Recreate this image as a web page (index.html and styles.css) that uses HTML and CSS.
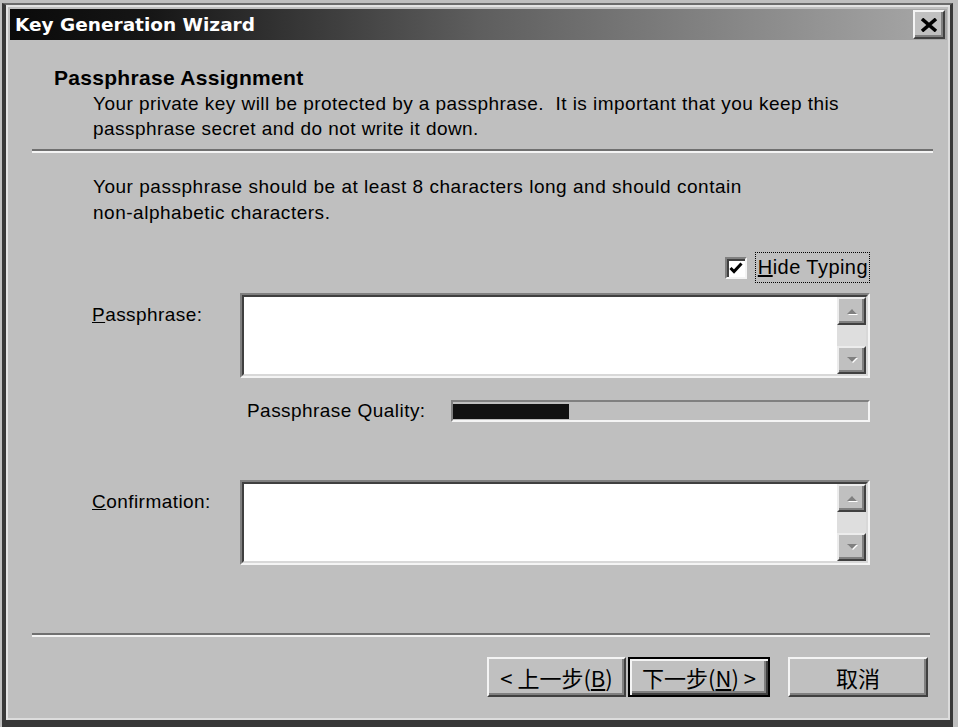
FILE: index.html
```html
<!DOCTYPE html>
<html lang="en">
<head>
    <meta charset="UTF-8">
    <title>Key Generation Wizard</title>
    <link rel="stylesheet" href="styles.css">
</head>
<body>
    <div class="window">
        <div class="titlebar">
            <span class="title">Key Generation Wizard</span>
            <button class="close-btn">
                <svg width="18" height="14" viewBox="0 0 18 14"><path d="M2 1 L16 13 M16 1 L2 13" stroke="#000" stroke-width="3.6" fill="none"/></svg>
            </button>
        </div>

        <!-- Wizard page header -->
        <div class="header">
            <div class="heading">Passphrase Assignment</div>
            <p class="subtitle">Your private key will be protected by a passphrase.&nbsp; It is important that you keep this<br>passphrase secret and do not write it down.</p>
        </div>
        <div class="separator"></div>

        <!-- Page body -->
        <p class="intro">Your passphrase should be at least 8 characters long and should contain<br>non-alphabetic characters.</p>

        <div class="form">
            <div class="hide-row">
                <span class="check-box">
                    <svg width="14" height="12" viewBox="0 0 14 12"><path d="M1.5 6 L5 9.5 L12.5 1.5" stroke="#000" stroke-width="3" fill="none"/></svg>
                </span>
                <span class="focus-text"><u>H</u>ide Typing</span>
            </div>

            <div class="field-row">
                <span class="field-label"><u>P</u>assphrase:</span>
                <div class="textbox">
                    <div class="textbox-inner">
                        <div class="text-area"></div>
                        <div class="scrollbar">
                            <div class="scroll-btn">
                                <svg width="12" height="8" viewBox="0 0 12 8"><path d="M1 7 L6 2 L11 7 Z" fill="#fff" transform="translate(1 1)"/><path d="M1 7 L6 2 L11 7 Z" fill="#808080"/></svg>
                            </div>
                            <div class="scroll-track"></div>
                            <div class="scroll-btn">
                                <svg width="12" height="8" viewBox="0 0 12 8"><path d="M1 1 L6 6 L11 1 Z" fill="#fff" transform="translate(1 1)"/><path d="M1 1 L6 6 L11 1 Z" fill="#808080"/></svg>
                            </div>
                        </div>
                    </div>
                </div>
            </div>

            <div class="quality-row">
                <span class="quality-label">Passphrase Quality:</span>
                <div class="progress">
                    <div class="progress-fill" style="width: 28%"></div>
                </div>
            </div>

            <div class="field-row confirm">
                <span class="field-label"><u>C</u>onfirmation:</span>
                <div class="textbox">
                    <div class="textbox-inner">
                        <div class="text-area"></div>
                        <div class="scrollbar">
                            <div class="scroll-btn">
                                <svg width="12" height="8" viewBox="0 0 12 8"><path d="M1 7 L6 2 L11 7 Z" fill="#fff" transform="translate(1 1)"/><path d="M1 7 L6 2 L11 7 Z" fill="#808080"/></svg>
                            </div>
                            <div class="scroll-track"></div>
                            <div class="scroll-btn">
                                <svg width="12" height="8" viewBox="0 0 12 8"><path d="M1 1 L6 6 L11 1 Z" fill="#fff" transform="translate(1 1)"/><path d="M1 1 L6 6 L11 1 Z" fill="#808080"/></svg>
                            </div>
                        </div>
                    </div>
                </div>
            </div>
        </div>

        <div class="separator bottom"></div>

        <!-- Wizard buttons -->
        <div class="buttons">
            <button class="btn">&lt; 上一步(<u>B</u>)</button>
            <button class="btn default">下一步(<u>N</u>) &gt;</button>
            <button class="btn cancel">取消</button>
        </div>
    </div>
</body>
</html>
```

FILE: styles.css
```css
body {
    margin: 0;
    background-color: #bfbfbf;
    font-family: "Liberation Sans", Arial, sans-serif;
    color: #000;
    width: 958px;
    height: 727px;
    overflow: hidden;
}

.window {
    box-sizing: border-box;
    width: 951px;
    height: 724px;
    margin: 3px 0 0 2px;
    border-left: 4px solid #383838;
    border-top: 2px solid #6a6a6a;
    border-right: 3px solid #383838;
    border-bottom: 7px solid #383838;
    padding: 4px 3px 0 4px;
    background-color: #bfbfbf;
    box-shadow: inset 2px 2px 0 #e4e4e4, inset -2px -2px 0 #dcdcdc;
}

.titlebar {
    display: flex;
    align-items: center;
    height: 31px;
    background: linear-gradient(to right, #0a0a0a 0%, #161616 15%, #5e5e5e 50%, #a8a8a8 100%);
}

.title {
    flex: 1;
    padding-left: 5px;
    font-family: "DejaVu Sans", sans-serif;
    font-weight: bold;
    font-size: 18.5px;
    color: #fff;
}

.close-btn {
    box-sizing: border-box;
    width: 32px;
    height: 29px;
    margin-right: 2px;
    padding: 0;
    display: flex;
    align-items: center;
    justify-content: center;
    background-color: #c0c0c0;
    border: 2px solid;
    border-color: #f4f4f4 #404040 #404040 #f4f4f4;
    box-shadow: inset -2px -2px 0 #808080;
}

.header {
    padding: 25px 0 0 44px;
}

.heading {
    font-weight: bold;
    font-size: 21px;
    letter-spacing: 0.3px;
    line-height: 26px;
}

.subtitle {
    margin: 0;
    padding-left: 39px;
    font-size: 19px;
    letter-spacing: 0.45px;
    line-height: 25px;
}

.separator {
    margin: 8px 14px 0 22px;
    border-top: 2px solid #707070;
    border-bottom: 2px solid #f4f4f4;
}

.separator.bottom {
    margin: 68px 17px 0 22px;
}

.intro {
    margin: 21px 0 0 83px;
    font-size: 19px;
    letter-spacing: 0.52px;
    line-height: 26px;
}

.form {
    padding: 0 77px 0 82px;
    font-size: 19px;
    letter-spacing: 0.45px;
}

.hide-row {
    display: flex;
    justify-content: flex-end;
    align-items: center;
    margin-top: 26px;
}

.check-box {
    box-sizing: border-box;
    width: 22px;
    height: 22px;
    margin-right: 8px;
    display: flex;
    align-items: center;
    justify-content: center;
    background-color: #fff;
    border: 2px solid;
    border-color: #808080 #f4f4f4 #f4f4f4 #808080;
    box-shadow: inset 2px 2px 0 #404040;
}

.focus-text {
    font-size: 20px;
    line-height: 25px;
    padding: 2px 1px 2px 2px;
    border: 1px dotted #000;
}

.field-row {
    display: flex;
    margin-top: 10px;
}

.field-row.confirm {
    margin-top: 58px;
}

.field-label {
    width: 148px;
    padding-top: 9px;
    line-height: 26px;
}

.textbox {
    flex: 1;
    box-sizing: border-box;
    height: 85px;
    border: 2px solid;
    border-color: #808080 #f4f4f4 #f4f4f4 #808080;
}

.textbox-inner {
    display: flex;
    height: 100%;
    box-sizing: border-box;
    border: 2px solid;
    border-color: #404040 #d8d8d8 #d8d8d8 #404040;
    background-color: #fff;
}

.text-area {
    flex: 1;
}

.scrollbar {
    width: 29px;
    display: flex;
    flex-direction: column;
}

.scroll-btn {
    box-sizing: border-box;
    height: 28px;
    display: flex;
    align-items: center;
    justify-content: center;
    background-color: #c0c0c0;
    border: 2px solid;
    border-color: #ececec #404040 #404040 #ececec;
    box-shadow: inset -2px -2px 0 #808080;
}

.scroll-track {
    flex: 1;
    background-color: #dedede;
}

.quality-row {
    display: flex;
    align-items: center;
    margin-top: 22px;
}

.quality-label {
    margin-left: 155px;
    line-height: 22px;
}

.progress {
    box-sizing: border-box;
    width: 419px;
    height: 22px;
    margin-left: auto;
    padding: 2px 0 1px 0;
    border: 2px solid;
    border-color: #808080 #f4f4f4 #f4f4f4 #808080;
}

.progress-fill {
    height: 100%;
    background-color: #111;
}

.buttons {
    display: flex;
    justify-content: flex-end;
    margin-top: 20px;
    padding-right: 19px;
}

.btn {
    box-sizing: border-box;
    width: 139px;
    height: 40px;
    padding: 0;
    font-family: "Noto Sans CJK SC", "Liberation Sans", sans-serif;
    font-size: 22px;
    color: #000;
    background-color: #c0c0c0;
    border: 2px solid;
    border-color: #f4f4f4 #404040 #404040 #f4f4f4;
    box-shadow: inset -2px -2px 0 #808080;
}

.btn.default {
    width: 142px;
    margin-left: 2px;
    border-color: #000;
    box-shadow: inset 2px 2px 0 #f4f4f4, inset -2px -2px 0 #404040, inset -4px -4px 0 #808080;
}

.btn.cancel {
    width: 140px;
    margin-left: 18px;
}
```
